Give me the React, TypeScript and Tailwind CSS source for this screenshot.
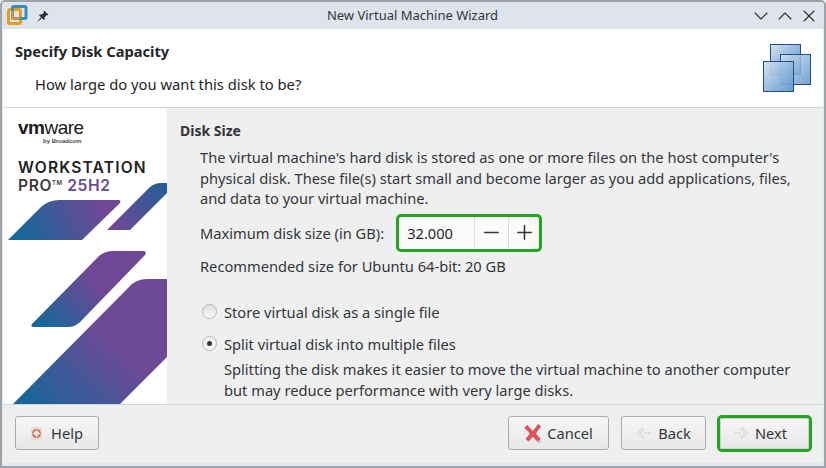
import React from "react";
import { ChevronDown, ChevronUp, X, Minus, Plus } from "lucide-react";

const font = "font-['Noto_Sans','Open_Sans',sans-serif]";

function AppLogo() {
  return (
    <svg width="21" height="21" viewBox="0 0 21 21">
      <rect x="1.5" y="4.5" width="12" height="14" rx="1.5" fill="none" stroke="#ee9a1e" strokeWidth="3" />
      <rect x="5.5" y="1.5" width="13.5" height="12" rx="1.5" fill="none" stroke="#2b92c6" strokeWidth="3" />
      <path d="M5.5 13.5V5.5" stroke="#ee9a1e" strokeWidth="2" />
      <path d="M4.5 13.5H13" stroke="#ee9a1e" strokeWidth="2" />
    </svg>
  );
}

function PinIcon() {
  return (
    <svg width="12" height="12" viewBox="0 0 12 12" fill="#2a2e33">
      <path d="M7.2 0.6 L11.4 4.8 L10.4 5.5 L9.6 5.1 L7.6 7.2 L7.6 9.4 L6.8 10 L2 5.2 L2.7 4.4 L4.9 4.4 L7 2.4 L6.6 1.5 Z" />
      <path d="M3.6 7.4 L4.6 8.4 L0.8 11.4 L0.6 11.2 Z" />
    </svg>
  );
}

function DisksIcon() {
  const square = (x: number, y: number, op: number) => (
    <rect x={x} y={y} width="30" height="30" fill="url(#disk)" fillOpacity={op} stroke="#1f4f85" strokeWidth="1" />
  );
  return (
    <svg width="48" height="48" viewBox="0 0 48 48" className="block">
      <defs>
        <linearGradient id="disk" x1="0" y1="0" x2="1" y2="1">
          <stop offset="0" stopColor="#d3e1f1" />
          <stop offset="1" stopColor="#5b92cc" />
        </linearGradient>
      </defs>
      {square(7.5, 0.5, 1)}
      {square(17.5, 10.5, 0.85)}
      {square(0.5, 17.5, 0.92)}
    </svg>
  );
}

function SideArt() {
  return (
    <svg width="164" height="221" viewBox="0 0 164 221" className="block shrink-0">
      <defs>
        <linearGradient id="s1" gradientUnits="userSpaceOnUse" x1="20" y1="60" x2="95" y2="20">
          <stop offset="0" stopColor="#14689a" />
          <stop offset="1" stopColor="#6e4895" />
        </linearGradient>
        <linearGradient id="s2" gradientUnits="userSpaceOnUse" x1="110" y1="40" x2="164" y2="0">
          <stop offset="0" stopColor="#6e4895" />
          <stop offset="1" stopColor="#1f5f96" />
        </linearGradient>
        <linearGradient id="s3" gradientUnits="userSpaceOnUse" x1="40" y1="145" x2="85" y2="95">
          <stop offset="0" stopColor="#14689a" />
          <stop offset="1" stopColor="#6e4895" />
        </linearGradient>
        <linearGradient id="s4" gradientUnits="userSpaceOnUse" x1="30" y1="221" x2="100" y2="150">
          <stop offset="0" stopColor="#1b659a" />
          <stop offset="1" stopColor="#6c4a96" />
        </linearGradient>
      </defs>
      <path d="M5 57 L38 24 Q46 17 56 17 L116 17 Q119 18 116 21 L79 57 Z" fill="url(#s1)" />
      <path d="M104 47 L146 5 Q151 0 158 0 L164 0 L164 10 L127 47 Z" fill="url(#s2)" />
      <path d="M29 141 L95 74 Q101 68 110 68 L141 68 Q144 69 142 72 L80 136 Q73 144 66 144 L31 144 Q27 144 29 141 Z" fill="url(#s3)" />
      <path d="M10 221 L126 104 Q133 96 144 96 L164 96 L164 174 L117 221 Z" fill="url(#s4)" />
    </svg>
  );
}

function HelpIcon() {
  return (
    <svg width="11" height="13" viewBox="0 0 11 13">
      <rect x="0" y="0" width="11" height="13" fill="#e8dfcd" />
      <circle cx="5.5" cy="6.5" r="3.6" fill="none" stroke="#d8675a" strokeWidth="1.8" />
      <path d="M5.5 2.5V10.5M1.5 6.5H9.5" stroke="#f4efe4" strokeWidth="1" />
    </svg>
  );
}

function CancelIcon() {
  return (
    <svg width="18" height="20" viewBox="0 0 18 20">
      <path d="M2.5 3.5 L15.5 16.5" stroke="#cfcfcf" strokeWidth="4" strokeLinecap="round" transform="translate(0 2)" />
      <path d="M3 2.5 C6 5 7 7 9 8.5 C11 6 12.5 3.5 14.5 1.5 L16.5 3.5 C14.5 6 13 8 11.5 10.5 C13 12.5 15 14.5 16 16 L13.5 18 C11.5 16 10.5 14.5 9 13 C7.5 15 6 16.5 4.5 18 L2 16 C3.5 14 5 12.5 6.5 10.5 C4.5 8 3 6.5 1 4.5 Z" fill="#e8505a" stroke="#c43d48" strokeWidth="0.8" />
    </svg>
  );
}

function FadedArrow({ flip }: { flip?: boolean }) {
  return (
    <svg width="15" height="14" viewBox="0 0 16 14" className={flip ? "-scale-x-100" : ""}>
      <path d="M9 1 L15 7 L9 13 L7 11 L11 7 L7 3 Z" fill="#e4e4e4" stroke="#cdcdcd" strokeWidth="0.6" />
      <circle cx="2" cy="7" r="1.2" fill="#d2d2d2" />
      <circle cx="5.5" cy="7" r="1.2" fill="#d2d2d2" />
    </svg>
  );
}

const btn =
  "h-[34px] rounded-[3px] border border-[#ababab] bg-gradient-to-b from-[#f6f6f6] to-[#e8e8e8] flex items-center justify-center text-[14.667px] text-[#31363b]";

export default function App() {
  return (
    <div className={`${font} w-[826px] h-[468px] overflow-hidden flex flex-col bg-[#e4e7ee] text-[#232629] border-2 border-[#9ea3aa] rounded-t-[5px]`}>
      {/* Title bar */}
      <div className="h-[27px] shrink-0 flex items-center bg-[#dfe3ec] pl-[5px] pr-[3px]">
        <AppLogo />
        <div className="ml-[9px]"><PinIcon /></div>
        <div className="flex-1 text-center text-[13px] text-[#31363b] pl-[27px]">New Virtual Machine Wizard</div>
        <div className="flex items-center text-[#2f3338]">
          <span className="w-[24px] flex justify-center"><ChevronDown size={24} strokeWidth={1.1} /></span>
          <span className="w-[24px] flex justify-center"><ChevronUp size={24} strokeWidth={1.1} /></span>
          <span className="w-[24px] flex justify-center"><X size={20} strokeWidth={1.4} /></span>
        </div>
      </div>

      <div className="flex-1 min-h-0 flex flex-col mx-px mb-[3px] bg-[#efefef]">
        {/* Header */}
        <div className="h-[79px] shrink-0 bg-white flex items-start justify-between border-b border-[#d4d4d4] pl-[12px] pr-[12px]">
          <div>
            <h1 className="mt-[12px] text-[14.667px] leading-[20px] font-bold text-[#232629]">Specify Disk Capacity</h1>
            <p className="mt-[13px] ml-[20px] text-[14.75px] leading-[20px] text-[#232629]">How large do you want this disk to be?</p>
          </div>
          <div className="mt-[15px]"><DisksIcon /></div>
        </div>

        <div className="flex-1 min-h-0 flex overflow-hidden">
          {/* Sidebar */}
          <div className="w-[164px] shrink-0 bg-white flex flex-col overflow-hidden">
            <div className="h-[75px] shrink-0 pl-[15px] font-['Liberation_Sans',sans-serif] text-[#1a1a1a]">
              <div className="mt-[11px] h-[18px] text-[19px] leading-[18px] tracking-[-0.5px]"><b>vm</b>ware</div>
              <div className="ml-[25px] text-[6px] leading-[8px] font-bold text-[#444]">by Broadcom</div>
            </div>
            <div className="h-0 overflow-visible pl-[15px] font-['Inter',sans-serif] -mt-[24px] mb-[24px] font-semibold">
              <div className="text-[15.6px] leading-[18px] tracking-[1.15px] text-[#222]">WORKSTATION</div>
              <div className="h-[18px] text-[15.6px] leading-[18px] tracking-[0.6px] text-[#3c3c3c]">PRO<span className="text-[6px] leading-[0] align-[6px]">TM</span> <span className="text-[#6a4a94]">25H2</span></div>
            </div>
            <SideArt />
          </div>

          {/* Content */}
          <div className="flex-1 min-w-0 pl-[13px] pt-[13px] text-[14.667px] leading-[20px] text-[#31363b]">
            <h2 className="font-bold text-[14px]">Disk Size</h2>
            <div className="ml-[20px]">
              <p className="mt-[6px] w-[610px] leading-[20.5px]">The virtual machine's hard disk is stored as one or more files on the host computer's physical disk. These file(s) start small and become larger as you add applications, files, and data to your virtual machine.</p>
              <div className="mt-[5px] flex items-center h-[38px]">
                <span>Maximum disk size (in GB):</span>
                <div className="ml-[12px] w-[146px] h-[38px] rounded-[5px] border-[3px] border-[#22a51f] bg-[#fbfbfb] flex items-center">
                  <span className="pl-[8px] flex-1 text-[#232629]">32.000</span>
                  <div className="w-[34px] h-full border-l border-[#dcdcdc] flex items-center justify-center text-[#31363b]"><Minus size={23} strokeWidth={1.6} /></div>
                  <div className="w-[31px] h-full border-l border-[#dcdcdc] flex items-center justify-center text-[#31363b]"><Plus size={23} strokeWidth={1.6} /></div>
                </div>
              </div>
              <p className="mt-[4px]">Recommended size for Ubuntu 64-bit: 20 GB</p>
              <div className="mt-[26px] flex items-center gap-[7px]">
                <span className="ml-[2px] w-[15px] h-[15px] rounded-full border border-[#b4b4b4] bg-gradient-to-b from-[#e2e2e2] to-[#f8f8f8]" />
                <span>Store virtual disk as a single file</span>
              </div>
              <div className="mt-[12px] flex items-center gap-[7px]">
                <span className="ml-[2px] w-[15px] h-[15px] rounded-full border border-[#b4b4b4] bg-[#f4f4f4] flex items-center justify-center">
                  <span className="w-[5px] h-[5px] rounded-full bg-[#31363b]" />
                </span>
                <span>Split virtual disk into multiple files</span>
              </div>
              <p className="mt-[5px] ml-[24px] w-[575px] leading-[21px]">Splitting the disk makes it easier to move the virtual machine to another computer but may reduce performance with very large disks.</p>
            </div>
          </div>
        </div>

        {/* Footer */}
        <div className="h-[59px] shrink-0 border-t border-[#d4d4d4] bg-[#efefef] flex items-center pl-[12px] pr-[11px] pb-[2px]">
          <button className={`${btn} w-[84px] gap-[9px]`}><HelpIcon />Help</button>
          <div className="flex-1" />
          <button className={`${btn} w-[101px] gap-[5px]`}><CancelIcon />Cancel</button>
          <button className={`${btn} w-[85px] gap-[7px] ml-[12px]`}><FadedArrow flip />Back</button>
          <div className="ml-[11px] w-[95px] h-[37px] rounded-[5px] border-[3px] border-[#22a51f] flex">
            <button className="flex-1 pr-[8px] rounded-[2px] border border-dotted border-[#b0b0b0] bg-gradient-to-b from-[#f6f6f6] to-[#e8e8e8] flex items-center justify-center gap-[6px] text-[14.667px] text-[#31363b]"><FadedArrow />Next</button>
          </div>
        </div>
      </div>
    </div>
  );
}
